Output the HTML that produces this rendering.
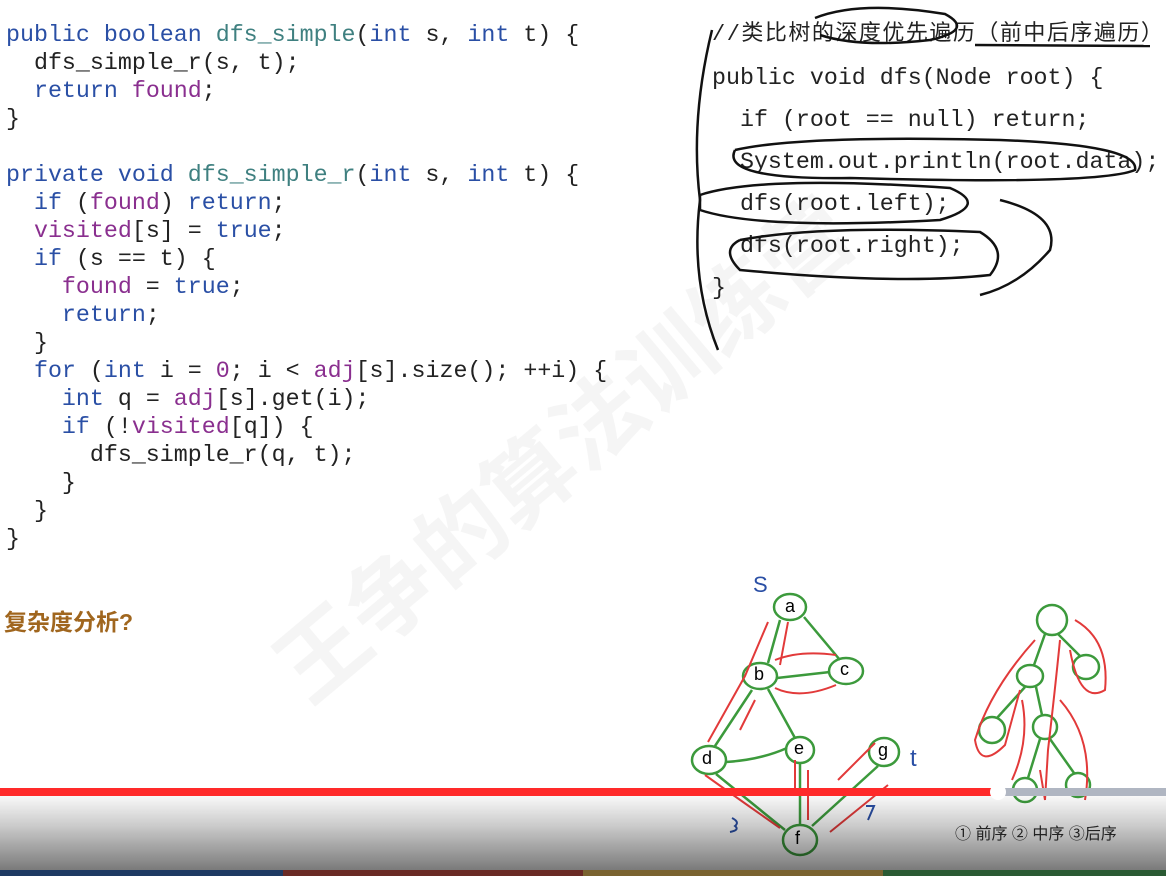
<!DOCTYPE html>
<html><head><meta charset="utf-8"><style>
body{margin:0;width:1166px;height:876px;background:#fff;overflow:hidden;position:relative;font-family:"Liberation Mono",monospace}
pre{margin:0;position:absolute;font-family:"Liberation Mono",monospace;font-size:23.3px;color:#222}
.k{color:#2a4fa5}.f{color:#3f8080}.v{color:#8a2f8f}
#c1{left:6px;top:21px;line-height:28px}
#c2{left:712px;top:57px;line-height:42px}
.hd{position:absolute;left:4px;top:603px;font:bold 23px "Liberation Sans","Noto Sans CJK SC",sans-serif;color:#a0661e}
.cm{position:absolute;left:712px;top:15px;font:22px "Liberation Mono","Noto Sans CJK SC",monospace;color:#222;letter-spacing:1.5px}
.wm{position:absolute;left:200px;top:380px;font:bold 90px "Noto Sans CJK SC",sans-serif;color:#000;opacity:.035;transform:rotate(-40deg);white-space:nowrap}
.bar{position:absolute;left:0;top:795px;width:1166px;height:75px;background:linear-gradient(rgba(0,0,0,0.02),rgba(0,0,0,0.2) 40%,rgba(0,0,0,0.52))}
.red{position:absolute;left:0;top:788px;width:1000px;height:8px;background:#ff2a2a}
.gry{position:absolute;left:1000px;top:788px;width:166px;height:8px;background:#b0b6c2}
.knob{position:absolute;left:990px;top:784px;width:16px;height:16px;border-radius:8px;background:#fff}
.st{position:absolute;top:870px;height:6px}
</style></head><body>
<div class="wm">王争的算法训练营</div>
<pre id="c1"><span class="k">public boolean</span> <span class="f">dfs_simple</span>(<span class="k">int</span> s, <span class="k">int</span> t) {
  dfs_simple_r(s, t);
  <span class="k">return</span> <span class="v">found</span>;
}

<span class="k">private void</span> <span class="f">dfs_simple_r</span>(<span class="k">int</span> s, <span class="k">int</span> t) {
  <span class="k">if</span> (<span class="v">found</span>) <span class="k">return</span>;
  <span class="v">visited</span>[s] = <span class="k">true</span>;
  <span class="k">if</span> (s == t) {
    <span class="v">found</span> = <span class="k">true</span>;
    <span class="k">return</span>;
  }
  <span class="k">for</span> (<span class="k">int</span> i = <span class="v">0</span>; i &lt; <span class="v">adj</span>[s].size(); ++i) {
    <span class="k">int</span> q = <span class="v">adj</span>[s].get(i);
    <span class="k">if</span> (!<span class="v">visited</span>[q]) {
      dfs_simple_r(q, t);
    }
  }
}</pre>
<div class="hd">复杂度分析?</div>
<div class="cm">//类比树的深度优先遍历（前中后序遍历）</div>
<pre id="c2">public void dfs(Node root) {
  if (root == null) return;
  System.out.println(root.data);
  dfs(root.left);
  dfs(root.right);
}</pre>
<svg width="1166" height="876" style="position:absolute;left:0;top:0" fill="none" stroke-width="2.5">
<g stroke="#111">
<path d="M712 30 Q690 120 700 200 Q690 280 718 350"/>
<path d="M815 18 Q860 0 945 14 Q975 30 930 40 Q860 48 820 35"/>
<path d="M975 45 L1150 46"/>
<path d="M735 150 Q800 135 1000 140 Q1140 145 1135 170 Q1100 185 850 178 Q720 180 735 150"/>
<path d="M700 195 Q760 175 950 188 Q990 205 940 220 Q760 230 700 210 Z"/>
<path d="M740 240 Q820 225 980 232 Q1010 250 990 275 Q900 285 740 270 Q720 250 740 240"/>
<path d="M1000 200 Q1060 215 1050 250 Q1020 285 980 295"/>
</g>
<g stroke="#3c9a3c">
<ellipse cx="790" cy="607" rx="16" ry="13"/><ellipse cx="760" cy="676" rx="17" ry="13"/>
<ellipse cx="846" cy="671" rx="17" ry="13"/><ellipse cx="709" cy="760" rx="17" ry="14"/>
<ellipse cx="800" cy="750" rx="14" ry="13"/><ellipse cx="884" cy="752" rx="15" ry="14"/>
<ellipse cx="800" cy="840" rx="17" ry="15"/>
<path d="M780 620 L768 663 M804 617 L840 660 M777 678 L830 672 M752 690 L715 746 M768 689 L795 738 M726 762 Q760 760 787 748 M800 764 L800 825 M878 766 L812 826 M716 774 L785 830"/>
<ellipse cx="1052" cy="620" rx="15" ry="15"/><ellipse cx="1030" cy="676" rx="13" ry="11"/>
<ellipse cx="1086" cy="667" rx="13" ry="12"/><ellipse cx="992" cy="730" rx="13" ry="13"/>
<ellipse cx="1045" cy="727" rx="12" ry="12"/><ellipse cx="1025" cy="790" rx="12" ry="12"/>
<ellipse cx="1078" cy="785" rx="12" ry="12"/>
<path d="M1045 634 L1034 665 M1058 634 L1080 656 M1025 687 L997 718 M1036 687 L1042 715 M1040 739 L1028 778 M1050 739 L1074 773"/>
</g>
<g stroke="#e23a3a" stroke-width="2">
<path d="M768 622 L745 676 L708 742 M705 775 Q740 800 780 828 M740 730 L755 700 M780 665 L788 622 M775 660 Q800 650 836 655 M836 685 Q800 700 775 688 M795 790 L795 760 M808 770 L808 820 M838 780 L875 743 M888 785 L830 832"/>
<path d="M1035 640 Q990 690 975 740 Q980 770 1005 745 L1020 690 M1022 700 Q1030 740 1012 780 M1040 770 L1045 800 L1048 750 Q1055 690 1060 640 M1075 620 Q1110 640 1105 690 Q1080 705 1070 650 M1060 700 Q1095 740 1085 800"/>
</g>
<g stroke="#2a4fa5" stroke-width="2"><path d="M732 818 Q740 822 735 826 Q740 830 730 832"/><path d="M866 806 L874 806 L868 820"/></g>
</svg>
<div style="position:absolute;left:753px;top:572px;color:#2a4fa5;font:22px 'Liberation Sans',sans-serif">S</div>
<div style="position:absolute;left:910px;top:745px;color:#2a4fa5;font:24px 'Liberation Sans',sans-serif">t</div>
<div style="position:absolute;left:785px;top:596px;font:18px 'Liberation Sans',sans-serif">a</div>
<div style="position:absolute;left:754px;top:664px;font:18px 'Liberation Sans',sans-serif">b</div>
<div style="position:absolute;left:840px;top:659px;font:18px 'Liberation Sans',sans-serif">c</div>
<div style="position:absolute;left:702px;top:748px;font:18px 'Liberation Sans',sans-serif">d</div>
<div style="position:absolute;left:794px;top:738px;font:18px 'Liberation Sans',sans-serif">e</div>
<div style="position:absolute;left:878px;top:740px;font:18px 'Liberation Sans',sans-serif">g</div>
<div style="position:absolute;left:795px;top:828px;font:18px 'Liberation Sans',sans-serif">f</div>
<div class="bar"></div>
<div class="red"></div><div class="gry"></div><div class="knob"></div>
<div style="position:absolute;left:955px;top:820px;font:16px 'Liberation Sans','Noto Sans CJK SC',sans-serif;color:#222">① 前序 ② 中序 ③后序</div>
<div class="st" style="left:0;width:283px;background:#1e3a63"></div>
<div class="st" style="left:283px;width:300px;background:#6a2a25"></div>
<div class="st" style="left:583px;width:300px;background:#7a6330"></div>
<div class="st" style="left:883px;width:283px;background:#2a5a33"></div>
</body></html>
